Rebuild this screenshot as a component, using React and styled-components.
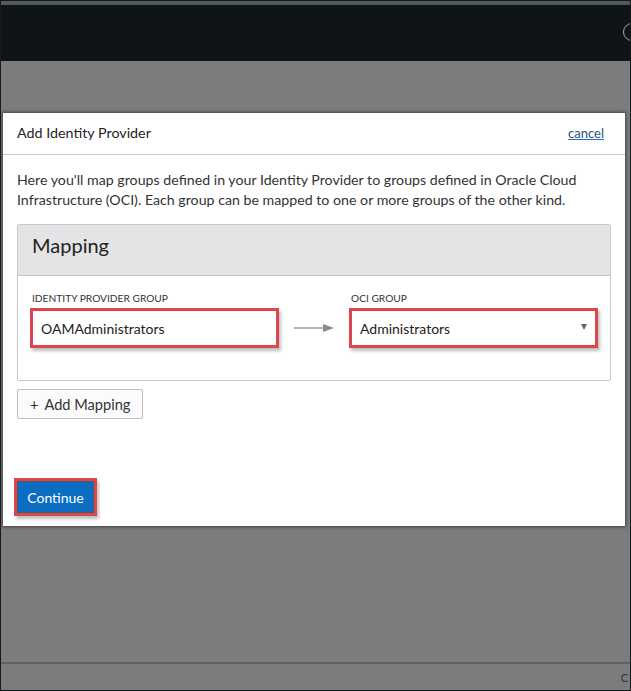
import styled, { createGlobalStyle } from 'styled-components';

const GlobalStyle = createGlobalStyle`
  html, body {
    margin: 0;
    padding: 0;
    background: #7c7c7c;
  }
  body {
    font-family: "Lato", "Liberation Sans", sans-serif;
  }
  * {
    box-sizing: border-box;
  }
`;

const Screen = styled.div`
  width: 631px;
  height: 691px;
  display: flex;
  flex-direction: column;
  border: 1px solid #161a1c;
  background: #7c7c7c;
  overflow: hidden;
`;
const TopStrip = styled.div`
  height: 4px;
  background: #525a5e;
`;
const NavBar = styled.div`
  height: 56px;
  background: #0f1418;
  display: flex;
  align-items: center;
  justify-content: flex-end;
`;
const UserIcon = styled.div`
  width: 18px;
  height: 18px;
  border: 1.5px solid #a9adb0;
  border-radius: 50%;
  margin-right: -11px;
  margin-top: -2px;
`;
const Overlay = styled.div`
  flex: 1;
  display: flex;
  flex-direction: column;
  padding: 52px 5px 0 2px;
`;
const Modal = styled.div`
  background: #fff;
  height: 413px;
  display: flex;
  flex-direction: column;
  box-shadow: 0 0 3px 1px rgba(40, 40, 40, 0.7);
`;
const ModalHeader = styled.div`
  height: 42px;
  display: flex;
  align-items: center;
  justify-content: space-between;
  padding: 0 21px 2px 14px;
  border-bottom: 1px solid #c8c8c8;
`;
const Title = styled.h1`
  margin: 0;
  font-size: 14.3px;
  font-weight: 400;
  color: #1e1e1e;
`;
const Cancel = styled.a`
  font-size: 13px;
  color: #2f4f76;
  text-decoration: underline;
  text-decoration-color: #1a73c8;
  cursor: pointer;
`;
const ModalBody = styled.div`
  flex: 1;
  display: flex;
  flex-direction: column;
  padding: 15px 14px 10px 14px;
`;
const Description = styled.p`
  margin: 0 0 14px;
  font-size: 14.2px;
  line-height: 20px;
  color: #333;
`;
const Panel = styled.div`
  border: 1px solid #c9c9c9;
  border-radius: 2px;
  height: 157px;
  display: flex;
  flex-direction: column;
`;
const PanelHeader = styled.div`
  height: 51px;
  background: #e4e4e6;
  border-bottom: 1px solid #c4c4c4;
  padding: 8px 14px;
  font-size: 20px;
  color: #222;
`;
const PanelBody = styled.div`
  display: flex;
  align-items: flex-end;
  padding: 16px 12px 0 12px;
  gap: 14px;
`;
const Field = styled.div`
  display: flex;
  flex-direction: column;
  gap: 4px;
`;
const Label = styled.label`
  font-size: 10.2px;
  color: #333;
  padding-left: 2px;
  text-transform: uppercase;
`;
const Highlight = styled.div`
  width: 249px;
  height: 40px;
  border: 3px solid #d9474f;
  box-shadow: 2px 3px 3px rgba(0, 0, 0, 0.25);
  background: #fff;
  display: flex;
  align-items: center;
  justify-content: space-between;
  padding: 0 8px;
  font-size: 14px;
  color: #222;
`;
const Caret = styled.span`
  width: 0;
  height: 0;
  border-left: 3.5px solid transparent;
  border-right: 3.5px solid transparent;
  border-top: 6px solid #666;
  margin-top: -3px;
`;
const ArrowBox = styled.div`
  height: 40px;
  display: flex;
  align-items: center;
  width: 58px;
  justify-content: center;
`;
const AddButton = styled.button`
  margin-top: 8px;
  align-self: flex-start;
  height: 30px;
  padding: 0 12px;
  border: 1px solid #bdbdbd;
  border-radius: 2px;
  background: #fbfbfb;
  font-family: inherit;
  font-size: 14.6px;
  color: #333;
  display: flex;
  align-items: center;
  gap: 6px;
`;
const Footer = styled.div`
  margin-top: auto;
  margin-left: -3px;
  align-self: flex-start;
  border: 3px solid #d9474f;
  box-shadow: 2px 3px 3px rgba(0, 0, 0, 0.25);
`;
const PrimaryButton = styled.button`
  display: block;
  height: 32px;
  width: 77px;
  border: 1px solid #4d5a66;
  background: #0b6ec3;
  color: #fff;
  font-family: inherit;
  font-size: 14px;
`;
const BottomBar = styled.div`
  margin-top: auto;
  height: 28px;
  border-top: 2px solid #5d6262;
  margin-left: -2px;
  margin-right: -5px;
  padding-right: 2px;
  display: flex;
  justify-content: flex-end;
  align-items: center;
  font-size: 11px;
  color: #333;
  overflow: hidden;
`;

function App() {
  return (
    <>
      <GlobalStyle />
      <Screen>
        <TopStrip />
        <NavBar>
          <UserIcon />
        </NavBar>
        <Overlay>
          <Modal>
            <ModalHeader>
              <Title>Add Identity Provider</Title>
              <Cancel>cancel</Cancel>
            </ModalHeader>
            <ModalBody>
              <Description>
                Here you'll map groups defined in your Identity Provider to groups defined in Oracle Cloud
                Infrastructure (OCI). Each group can be mapped to one or more groups of the other kind.
              </Description>
              <Panel>
                <PanelHeader>Mapping</PanelHeader>
                <PanelBody>
                  <Field>
                    <Label>Identity Provider Group</Label>
                    <Highlight>OAMAdministrators</Highlight>
                  </Field>
                  <ArrowBox>
                    <svg width="42" height="10" viewBox="0 0 42 10">
                      <line x1="1" y1="5" x2="32" y2="5" stroke="#9a9a9a" strokeWidth="1.5" />
                      <path d="M30 1 L41 5 L30 9 Z" fill="#8a8a8a" />
                    </svg>
                  </ArrowBox>
                  <Field>
                    <Label>OCI Group</Label>
                    <Highlight>
                      Administrators
                      <Caret />
                    </Highlight>
                  </Field>
                </PanelBody>
              </Panel>
              <AddButton>
                <span>+</span> Add Mapping
              </AddButton>
              <Footer>
                <PrimaryButton>Continue</PrimaryButton>
              </Footer>
            </ModalBody>
          </Modal>
          <BottomBar>C</BottomBar>
        </Overlay>
      </Screen>
    </>
  );
}

export default App;
